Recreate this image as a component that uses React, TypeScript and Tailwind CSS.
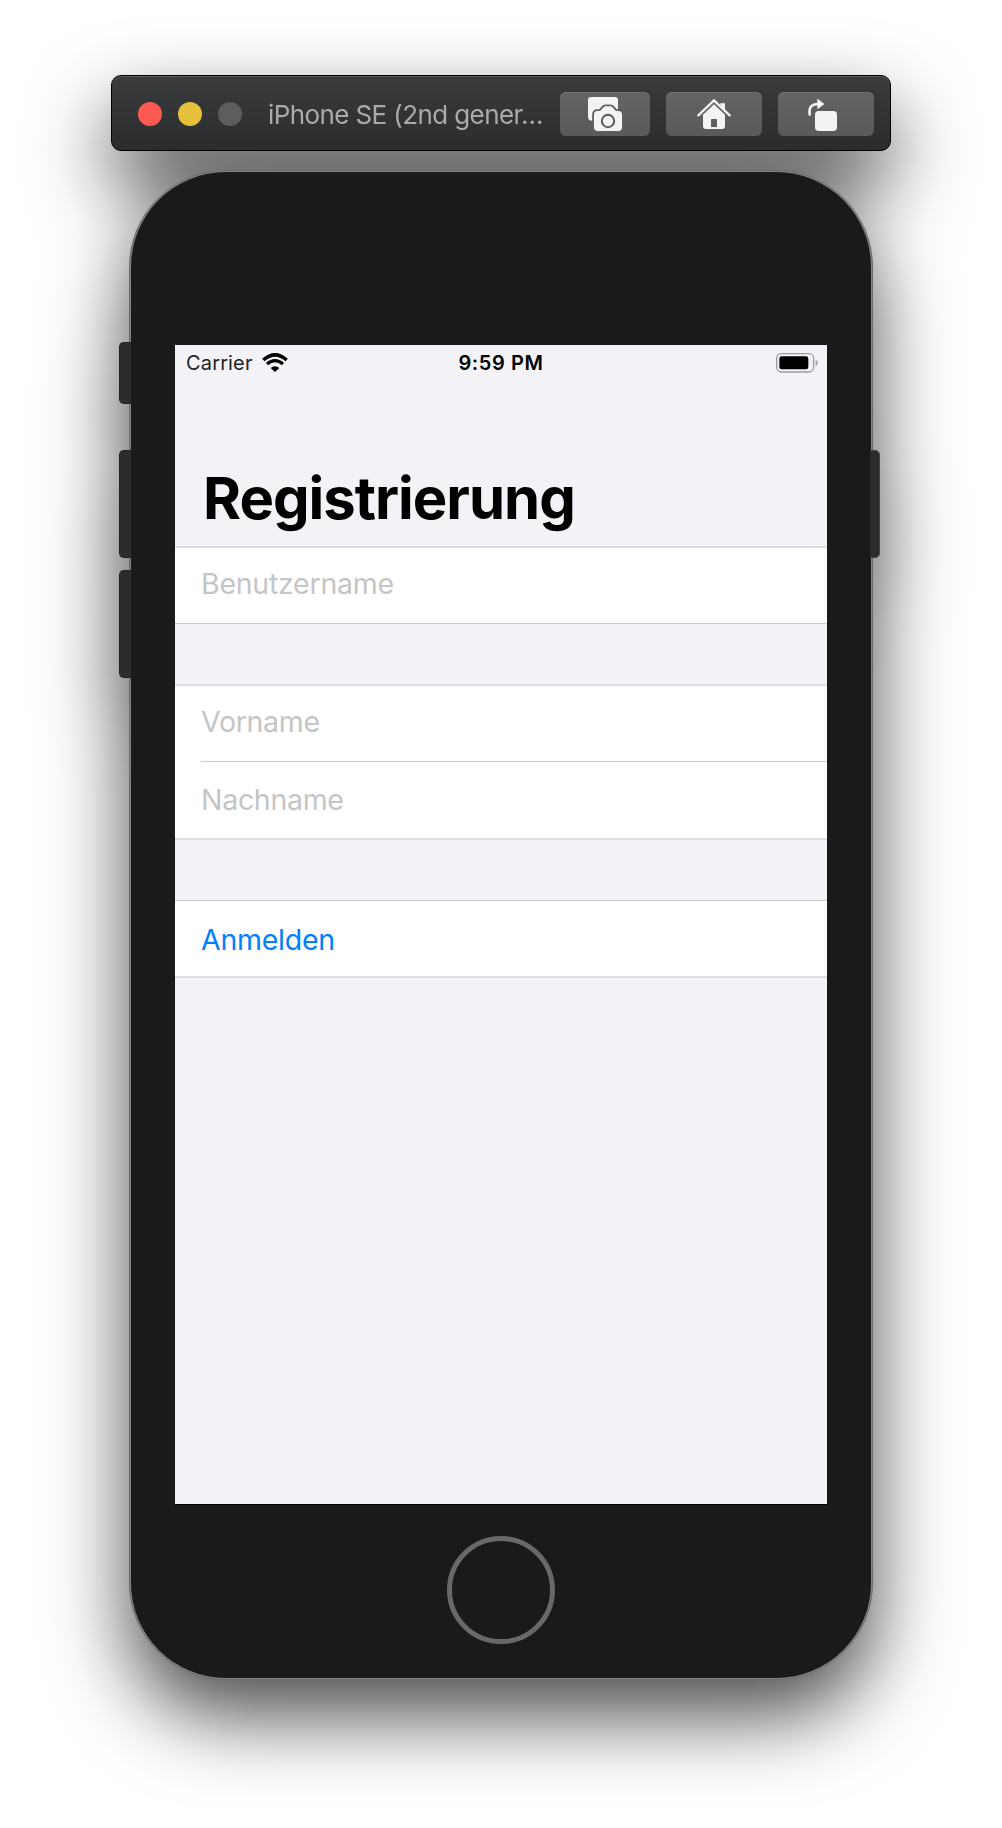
import React from "react";

function CameraIcon() {
  return (
    <svg viewBox="0 0 270 132" className="h-[44px] w-[90px]">
      <rect x="84" y="15" width="90" height="63" rx="9" fill="#f3f3f5" />
      <path d="M84 60h16v26h-4q-12 0-12-12z" fill="#f3f3f5" />
      <path
        d="M112 57h5q4 0 7-4l5-6q3-4 8-4h14q5 0 8 4l5 6q3 4 7 4h4q11 0 11 11v38q0 11-11 11h-62q-11 0-11-11V68q0-11 10-11z"
        fill="#f3f3f5"
        stroke="#5e5f61"
        strokeWidth="11"
        paintOrder="stroke"
      />
      <circle cx="144" cy="87" r="18.5" fill="#f3f3f5" stroke="#58595b" strokeWidth="6" />
    </svg>
  );
}

function HouseIcon() {
  return (
    <svg viewBox="0 0 288 132" className="h-[44px] w-[96px]" fill="#f3f3f5">
      <path d="M163 34h14v22l-14-12z" />
      <path d="M97 70l47-45 47 45" fill="none" stroke="#f3f3f5" strokeWidth="7" strokeLinecap="round" strokeLinejoin="round" />
      <path
        fillRule="evenodd"
        d="M144 37l33 31v34q0 9-9 9h-48q-9 0-9-9V68zM135 84q0-3 3-3h12q3 0 3 3v21h-18z"
      />
    </svg>
  );
}

function RotateIcon() {
  return (
    <svg viewBox="0 0 288 132" className="h-[44px] w-[96px]" fill="#f3f3f5">
      <rect x="111" y="57" width="66" height="60" rx="11" />
      <path d="M95 68Q90 37 119 36" fill="none" stroke="#f3f3f5" strokeWidth="7.5" strokeLinecap="round" />
      <path d="M119 22l19 14-19 14z" stroke="#f3f3f5" strokeWidth="2" strokeLinejoin="round" />
    </svg>
  );
}

function ToolButton({ className, children }: { className: string; children: React.ReactNode }) {
  return (
    <button
      className={`h-[44px] shrink-0 rounded-[6px] bg-linear-to-b from-[#636466] to-[#58595b] shadow-[inset_0_1px_0_#727375] ${className}`}
    >
      {children}
    </button>
  );
}

function TitleBar() {
  return (
    <header className="flex h-[76px] w-[780px] items-center rounded-[10px] border border-black bg-linear-to-b from-[#3a3b3d] to-[#2b2c2e] pt-[2px] pl-[26px] shadow-[inset_0_1px_0_#5b5c5e]">
      <div className="flex shrink-0 gap-4">
        <span className="size-6 rounded-full bg-[#ff5a52]" />
        <span className="size-6 rounded-full bg-[#e6c03a]" />
        <span className="size-6 rounded-full bg-[#5c5d5f]" />
      </div>
      <h1 className="ml-[26px] w-[292px] shrink-0 whitespace-nowrap text-[26px] tracking-[-0.6px] text-[#a9aaab]">
        iPhone SE (2nd gener…
      </h1>
      <div className="flex gap-4">
        <ToolButton className="w-[90px]"><CameraIcon /></ToolButton>
        <ToolButton className="w-[96px]"><HouseIcon /></ToolButton>
        <ToolButton className="w-[96px]"><RotateIcon /></ToolButton>
      </div>
    </header>
  );
}

function StatusBar() {
  return (
    <div className="grid h-[36px] shrink-0 grid-cols-3 items-center pr-[9px] pl-[11px] text-black">
      <div className="flex items-center gap-[9px]">
        <span className="text-[20px] tracking-[0.15px] text-[#222]">Carrier</span>
        <svg viewBox="0 0 78 57" className="mt-[-2px] h-[19px] w-[26px]" fill="none" stroke="#000">
          <path d="M4 21Q39-10 74 21" strokeWidth="10.5" />
          <path d="M15 33Q39 13 63 33" strokeWidth="9.5" />
          <path d="M39 57L26 45Q39 34 52 45z" fill="#000" stroke="none" />
        </svg>
      </div>
      <span className="-ml-[2px] text-center text-[20px] font-semibold tracking-[0.6px]">9:59 PM</span>
      <svg viewBox="0 0 126 60" className="mt-[-1px] h-[20px] w-[42px] justify-self-end">
        <rect x="2" y="2" width="111" height="55" rx="14" fill="none" stroke="#9d9ca0" strokeWidth="4" />
        <rect x="10" y="10" width="87" height="39" rx="7" fill="#000" />
        <path d="M119 21q6 2 6 9t-6 9z" fill="#9d9ca0" />
      </svg>
    </div>
  );
}

function FormScreen() {
  return (
    <main className="ml-[44px] flex h-[1160px] w-[652px] flex-col border-b border-black bg-[#f2f2f7]">
      <StatusBar />
      <h2 className="mt-[80px] h-[85px] shrink-0 pl-[28px] text-[58px] leading-[74px] font-bold tracking-[-1px] text-black">
        Registrierung
      </h2>
      <div className="flex h-[78px] shrink-0 items-center border-t-2 border-b border-t-[#dddce0] border-b-[#c9c9cc] bg-white pb-[2px] pl-[26px] text-[28.5px] text-[#c5c5c6]">
        <span className="tracking-[-0.25px]">Benutzername</span>
      </div>
      <div className="mt-[60px] shrink-0 border-y-2 border-[#dddce0] bg-white text-[28.5px] text-[#c5c5c6]">
        <div className="flex h-[75px] items-center pb-[2px] pl-[26px]">
          <span className="tracking-[-0.3px]">Vorname</span>
        </div>
        <div className="ml-[26px] flex h-[77px] items-center border-t border-[#c9c9cc]">
          <span className="tracking-[-0.3px]">Nachname</span>
        </div>
      </div>
      <div className="mt-[60px] flex h-[78px] shrink-0 items-center border-t border-b-2 border-t-[#c9c9cc] border-b-[#dddce0] bg-white pt-[3px] pl-[26px] text-[28.5px] text-[#007fff]">
        <button className="tracking-[-0.25px]">Anmelden</button>
      </div>
    </main>
  );
}

function Phone() {
  return (
    <section className="relative mt-[19px] h-[1510px] w-[744px]">
      <div className="h-full rounded-[97px] border border-[#6a6a6a] bg-[#858585] p-px">
        <div className="h-full rounded-[95px] bg-[#1a1a1a] pt-[173px]">
          <FormScreen />
          <div className="mt-[31px] ml-[316px] size-[108px] rounded-full border-[5px] border-[#686868]" />
        </div>
      </div>
      <span className="absolute top-[172px] left-[-10px] h-[62px] w-[12px] rounded-l-[5px] border border-r-0 border-[#222] bg-[#2c2c2c]" />
      <span className="absolute top-[280px] left-[-10px] h-[108px] w-[12px] rounded-l-[5px] border border-r-0 border-[#222] bg-[#2c2c2c]" />
      <span className="absolute top-[400px] left-[-10px] h-[108px] w-[12px] rounded-l-[5px] border border-r-0 border-[#222] bg-[#2c2c2c]" />
      <span className="absolute top-[280px] right-[-7px] h-[108px] w-[10px] rounded-r-[5px] border border-l-0 border-[#444] bg-[#2c2c2c]" />
    </section>
  );
}

export default function App() {
  return (
    <div className="h-[1828px] w-[1002px] overflow-hidden bg-white pt-[75px] font-['Inter',sans-serif]">
      <div className="flex flex-col items-center drop-shadow-[0_36px_40px_rgba(0,0,0,0.7)]">
        <TitleBar />
        <Phone />
      </div>
    </div>
  );
}
